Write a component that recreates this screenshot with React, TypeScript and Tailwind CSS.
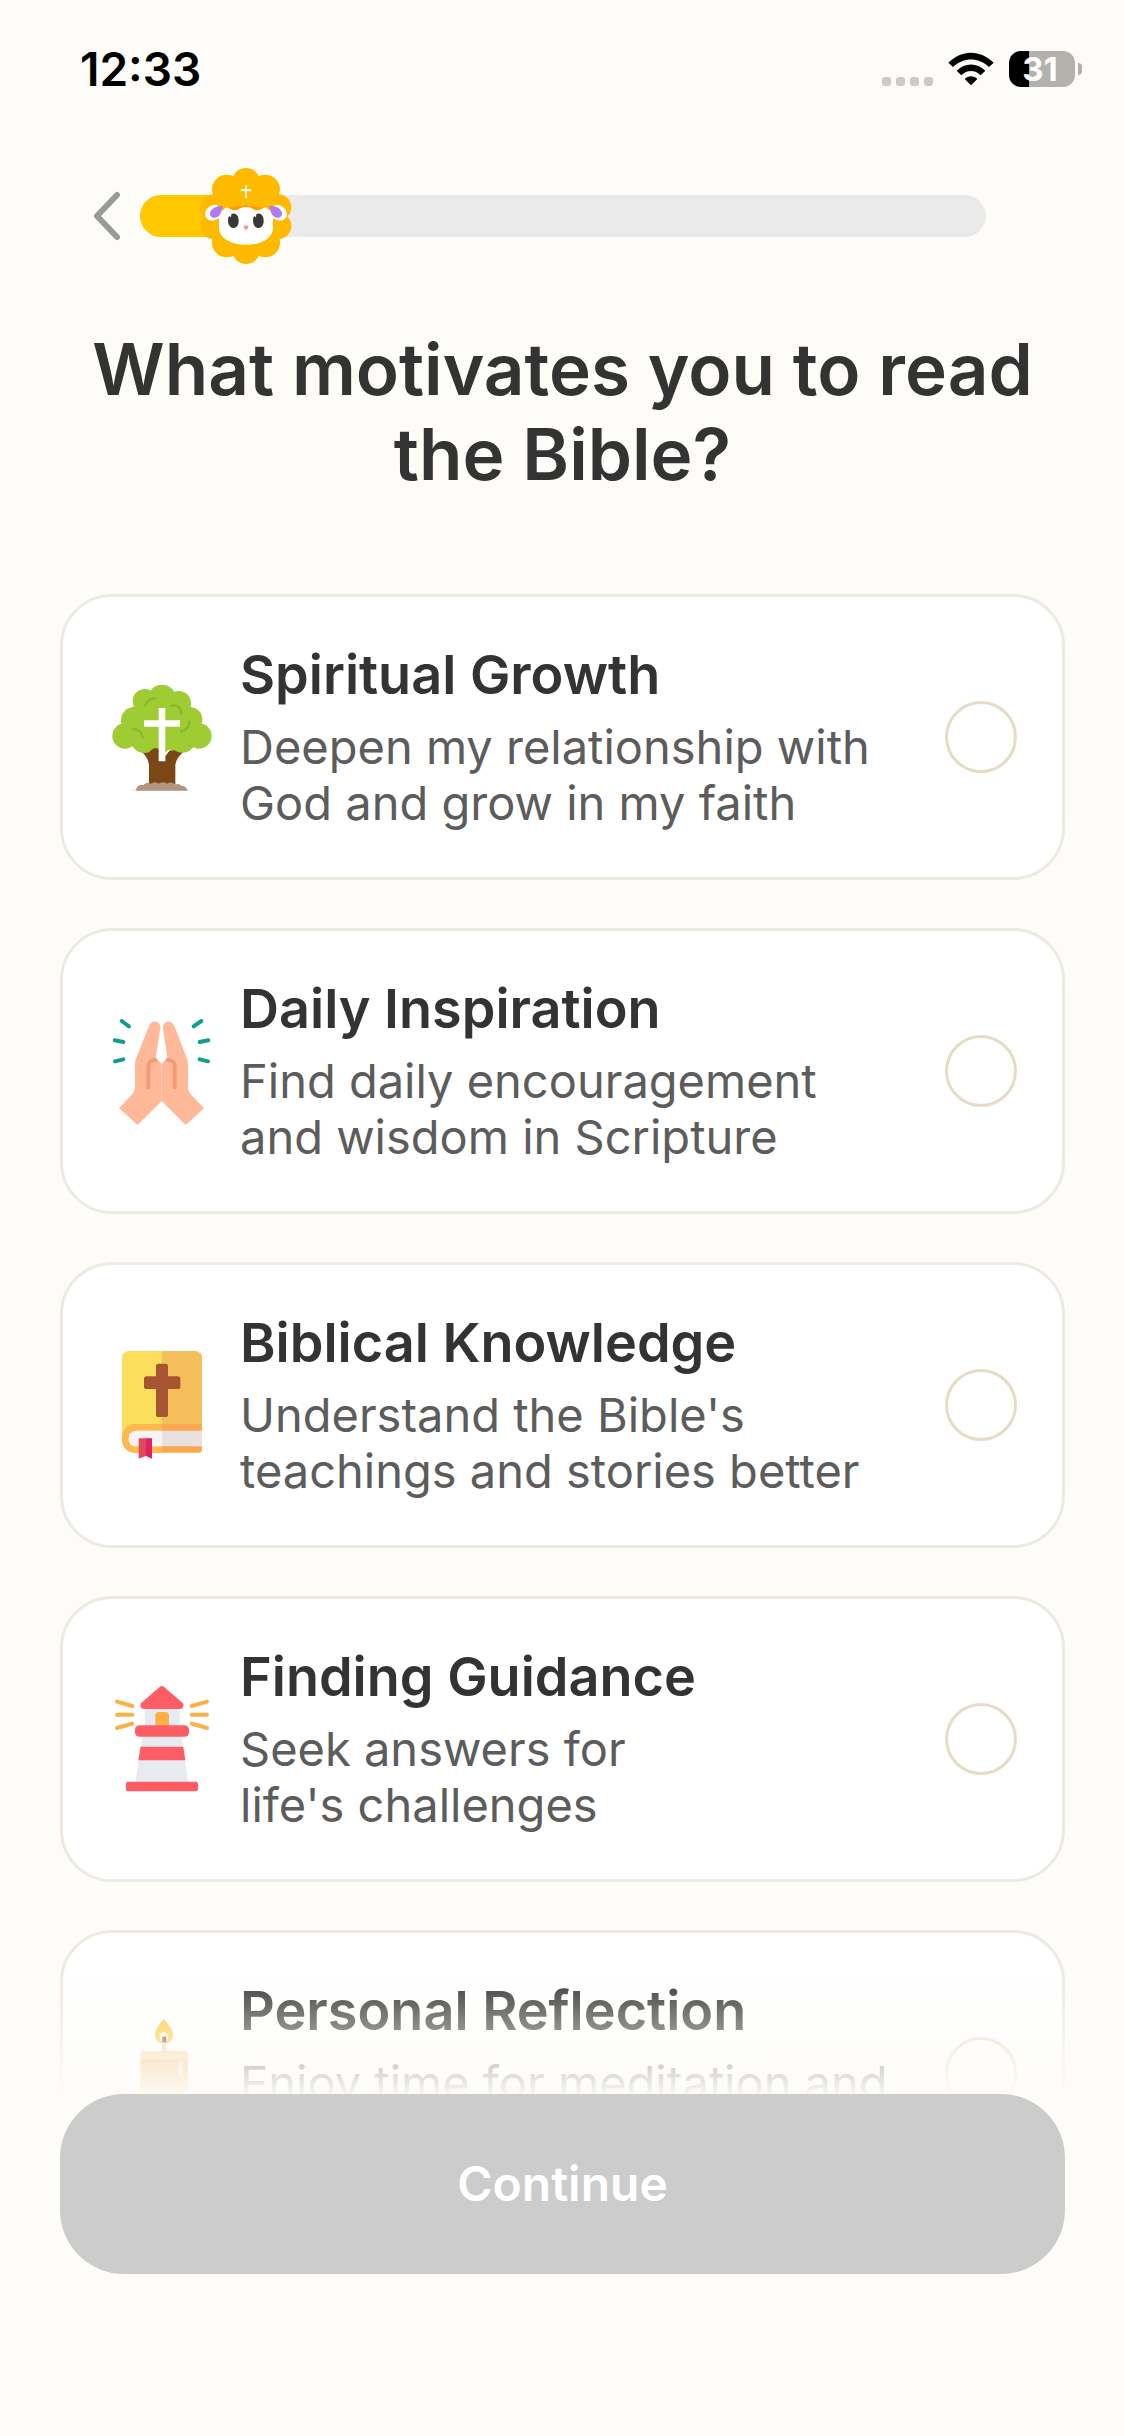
import { useState } from "react";
import type { ReactNode } from "react";

type Option = {
  id: string;
  title: string;
  description: string;
  icon: ReactNode;
};

function TreeIcon() {
  return (
    <svg viewBox="39 39 324 324" className="size-27 shrink-0" aria-hidden="true">
      <path d="M106 362h186l-20-6H126z" fill="#e9e4e0" />
      <path
        d="M138 244c14 12 22 24 24 42v58h79v-58c2-18 12-30 28-44l-36-14h-68z"
        fill="#7a4715"
      />
      <path
        d="M123 362c0-12 10-20 22-16 5-8 14-10 22-5 8-6 18-6 24 0 8-6 18-6 25 0 9-6 18-5 24 3 8-4 16-2 20 4 9-1 16 5 17 14z"
        fill="#b3957f"
      />
      <g fill="#9fcb33">
        <circle cx="90" cy="198" r="38" />
        <circle cx="116" cy="150" r="38" />
        <circle cx="149" cy="93" r="36" />
        <circle cx="201" cy="86" r="42" />
        <circle cx="251" cy="100" r="37" />
        <circle cx="286" cy="148" r="36" />
        <circle cx="312" cy="198" r="38" />
        <circle cx="148" cy="208" r="41" />
        <circle cx="262" cy="208" r="40" />
        <path d="M110 110h180v112l-34 22-12-4-30 4-12-8-24-1-14 8-54-20z" />
      </g>
      <g fill="none" stroke="#8bb72a" strokeWidth="7" strokeLinecap="round">
        <path d="M151 106c4-13 14-20 28-21" />
        <path d="M230 107c16-4 27 4 29 24" />
        <path d="M113 177c17-1 28 9 30 26" />
        <path d="M283 155c-1 17-10 27-25 29" />
      </g>
      <path d="M163 246c6-6 12-11 18-12l10 8v20h-12z" fill="#7a4715" />
      <path d="M191 114h20v37h44v19h-44v75l16-8-16 22v15h-20V170h-44v-19h44z" fill="#fff" />
    </svg>
  );
}

function PrayingHandsIcon() {
  return (
    <svg viewBox="39 51 324 324" className="size-27 shrink-0" aria-hidden="true">
      <g stroke="#0f9d8d" strokeWidth="12" strokeLinecap="round">
        <path d="M80 63l22 16M59 121l26 5M60 184l25-6M319 63l-23 16M340 121l-26 5M339 184l-25-6" />
      </g>
      <g fill="#ffb898">
        <path d="M163 76c8-19 35-14 33 8l-14 90 18 17v112l-72 72-56-50 37-39c8-9 11-15 11-25v-68c0-8 2-14 5-22z" />
        <path d="M237 76c-8-19-35-14-33 8l13 90-17 17v112l72 72 55-50-37-39c-8-9-11-15-11-25v-68c0-8-2-14-5-22z" />
      </g>
      <g fill="none" stroke="#f39b78" strokeWidth="12" strokeLinecap="round">
        <path d="M160 262v-63c0-11 8-19 21-19" />
        <path d="M239 262v-63c0-11-8-19-21-19" />
      </g>
    </svg>
  );
}

function BibleIcon() {
  return (
    <svg viewBox="39 63 324 324" className="size-27 shrink-0" aria-hidden="true">
      <path d="M101 63h100v305h-80c-24 0-40-17-40-40V83c0-11 9-20 20-20z" fill="#fbdf5c" />
      <path d="M201 63h100c11 0 20 9 20 20v200l-40 40h-80z" fill="#f4be5a" />
      <path d="M321 283v19h-10v47h10v10c0 6-4 9-9 9H121c-24 0-40-17-40-42s16-43 40-43z" fill="#fba650" />
      <path d="M201 283h-80c-24 0-40 18-40 43s16 42 40 42h80z" fill="#fdb84f" />
      <path d="M321 302v47H123c-14 0-22-10-22-23s8-24 22-24z" fill="#e9e1de" />
      <path d="M201 302v47h-78c-14 0-22-10-22-23s8-24 22-24z" fill="#f8f4f4" />
      <path d="M131 325h21v53l-21 8z" fill="#e2495d" />
      <path d="M151 325h20v61l-20-9z" fill="#de2361" />
      <path
        d="M190 101h22c4 0 7 3 7 7v31h30c4 0 7 3 7 7v24c0 4-3 7-7 7h-30v77c0 4-3 7-7 7h-22c-4 0-7-3-7-7v-77h-29c-4 0-7-3-7-7v-24c0-4 3-7 7-7h29v-31c0-4 3-7 7-7z"
        fill="#a75530"
      />
    </svg>
  );
}

function LighthouseIcon() {
  return (
    <svg viewBox="39 45 324 324" className="size-27 shrink-0" aria-hidden="true">
      <g stroke="#fdb045" strokeWidth="12" strokeLinecap="round">
        <path d="M66 95l46 13M66 134h46M66 174l46-13M336 95l-46 13M336 134h-46M336 174l-46-13" />
      </g>
      <path d="M149 112h105v58H149z" fill="#e6eaf1" />
      <path d="M181 168v-32c0-6 4-10 10-10h21c6 0 10 4 10 10v32z" fill="#fdb045" />
      <path d="M194 51c4-4 9-4 13 0l57 49c4 8 0 17-9 17H147c-9 0-14-9-9-17z" fill="#ff5d66" />
      <path d="M143 196h116l21 142H121z" fill="#e6eaf1" />
      <path d="M137 230h128l6 41H130z" fill="#ff5d66" />
      <rect x="120" y="166" width="162" height="34" rx="13" fill="#ff5d66" />
      <rect x="93" y="335" width="216" height="29" rx="6" fill="#ff5d66" />
    </svg>
  );
}

function CandleIcon() {
  return (
    <svg viewBox="174 297 324 324" className="size-27 shrink-0" aria-hidden="true">
      <path d="M341 297c12 14 28 32 28 49 0 15-11 25-27 25s-27-10-27-25c0-17 14-35 26-49z" fill="#fbc531" />
      <ellipse cx="342" cy="352" rx="13" ry="15" fill="#fff3d8" />
      <path d="M337 364h12v36h-12z" fill="#f4cf9d" />
      <path d="M337 350h12v17h-12z" fill="#7c3b20" />
      <rect x="271" y="394" width="143" height="226" rx="12" fill="#f5b877" />
      <path d="M271 418v-12c0-7 5-12 12-12h119c7 0 12 5 12 12v12z" fill="#fbd29c" />
      <path d="M386 420h12v50h-12z" fill="#fde0b8" />
    </svg>
  );
}

function SheepMarker() {
  return (
    <svg viewBox="21 39 288 288" className="absolute -top-[27px] -right-12 size-24 max-w-none" aria-hidden="true">
      <g fill="#ffba00">
        <circle cx="165" cy="183" r="112" />
        <circle cx="165" cy="81" r="42" />
        <circle cx="107" cy="103" r="44" />
        <circle cx="223" cy="103" r="44" />
        <circle cx="67" cy="157" r="39" />
        <circle cx="262" cy="157" r="39" />
        <circle cx="67" cy="213" r="39" />
        <circle cx="262" cy="213" r="39" />
        <circle cx="107" cy="263" r="44" />
        <circle cx="223" cy="263" r="44" />
        <circle cx="165" cy="285" r="42" />
      </g>
      <ellipse cx="68" cy="173" rx="27" ry="22" transform="rotate(-32 68 173)" fill="#fff" />
      <ellipse cx="262" cy="173" rx="27" ry="22" transform="rotate(32 262 173)" fill="#fff" />
      <path d="M84 190c0-26 34-46 81-46s81 20 81 46v28c0 30-33 51-81 51s-81-21-81-51z" fill="#fff" />
      <path d="M95 152c-2 20-10 34-22 36-10 1-18-6-16-15 3-13 20-22 38-21z" fill="#b07bee" />
      <path d="M235 152c2 20 10 34 22 36 10 1 18-6 16-15-3-13-20-22-38-21z" fill="#b07bee" />
      <path d="M106 152c10 14 31 18 41 8 12-5 24-5 36 0 10 10 31 6 41-8l-20-20h-78z" fill="#ff9c00" />
      <g fill="#ffba00">
        <circle cx="114" cy="116" r="42" />
        <circle cx="147" cy="124" r="30" />
        <circle cx="165" cy="116" r="30" />
        <circle cx="183" cy="124" r="30" />
        <circle cx="216" cy="116" r="42" />
        <path d="M64 130c0 16 8 22 30 22v-40zM266 130c0 16-8 22-30 22v-40z" />
      </g>
      <path d="M111 196c0-5 1-9 3-13l6 4 1-10c12-6 22 3 22 20 0 14-7 22-16 22s-16-9-16-23z" fill="#383838" />
      <path d="M186 196c0-5 1-9 3-13l6 4 1-10c12-6 22 3 22 20 0 14-7 22-16 22s-16-9-16-23z" fill="#383838" />
      <path d="M158 215c0-5 14-5 14 0 0 4-3 9-7 9s-7-5-7-9z" fill="#ff9292" />
      <path
        d="M163 91h4l-1 13 13-1v5l-13-1 1 22h-4l1-22-13 1v-5l13 1z"
        fill="#fff"
        stroke="#fff"
        strokeWidth="2"
      />
    </svg>
  );
}

function StatusBar() {
  return (
    <div className="flex items-center justify-between pt-[42px] pr-[43px] pl-20">
      <span className="text-[46px] leading-[54px] font-semibold text-black">12:33</span>
      <div className="flex items-center gap-[15px]">
        <div className="flex gap-[5px] pt-6">
          {[0, 1, 2, 3].map((dot) => (
            <span key={dot} className="size-[9px] rounded-[3px] bg-[#cbcac6]" />
          ))}
        </div>
        <svg viewBox="0 0 138 100" className="h-[34px] w-[46px]" aria-label="Wi-Fi">
          <path d="M1 31C40-9 98-9 137 31l-14 13C92 14 46 14 15 44z" />
          <path d="M26 55c25-25 61-25 86 0L98 69c-17-17-41-17-58 0z" />
          <path d="M50 80c11-11 27-11 38 0L69 99z" />
        </svg>
        <div className="flex items-center gap-[3px]">
          <div className="flex h-9 w-[66px] items-center justify-center rounded-xl bg-linear-to-r from-black from-31% to-[#b2b1ac] to-31% pr-1">
            <span className="text-[33px] leading-9 font-bold text-white">31</span>
          </div>
          <span className="h-3 w-1 rounded-r-full bg-[#b2b1ac]" />
        </div>
      </div>
    </div>
  );
}

function ProgressHeader() {
  return (
    <header className="flex items-center gap-5 pt-[95px] pr-[139px] pl-[93px]">
      <button type="button" aria-label="Back" className="shrink-0">
        <svg viewBox="0 0 27 50" className="h-[50px] w-[27px]" fill="none">
          <path d="M24 4L4 25l20 21" stroke="#9a9a97" strokeWidth="6" strokeLinecap="round" strokeLinejoin="round" />
        </svg>
      </button>
      <div
        role="progressbar"
        aria-label="Onboarding progress"
        aria-valuenow={12}
        className="h-[42px] flex-1 rounded-full bg-[#ebeaea]"
      >
        <div className="relative h-full w-1/8 rounded-l-full bg-[#ffc800]">
          <SheepMarker />
        </div>
      </div>
    </header>
  );
}

const options: Option[] = [
  {
    id: "growth",
    title: "Spiritual Growth",
    description: "Deepen my relationship with\nGod and grow in my faith",
    icon: <TreeIcon />,
  },
  {
    id: "inspiration",
    title: "Daily Inspiration",
    description: "Find daily encouragement\nand wisdom in Scripture",
    icon: <PrayingHandsIcon />,
  },
  {
    id: "knowledge",
    title: "Biblical Knowledge",
    description: "Understand the Bible's\nteachings and stories better",
    icon: <BibleIcon />,
  },
  {
    id: "guidance",
    title: "Finding Guidance",
    description: "Seek answers for\nlife's challenges",
    icon: <LighthouseIcon />,
  },
  {
    id: "reflection",
    title: "Personal Reflection",
    description: "Enjoy time for meditation and",
    icon: <CandleIcon />,
  },
];

type OptionCardProps = {
  option: Option;
  checked: boolean;
  onSelect: (id: string) => void;
};

function OptionCard({ option, checked, onSelect }: OptionCardProps) {
  return (
    <label
      htmlFor={option.id}
      className="flex min-h-[286px] cursor-pointer items-center gap-6 rounded-[52px] border-3 border-[#ebebe1] bg-white px-[45px] py-11"
    >
      {option.icon}
      <span className="flex flex-1 flex-col gap-3">
        <span className="text-[54px] leading-16 font-semibold text-[#333333]">{option.title}</span>
        <span className="min-h-28 text-[47px] leading-14 whitespace-pre-line text-[#5c5c5c]">
          {option.description}
        </span>
      </span>
      <input
        type="radio"
        id={option.id}
        name="motivation"
        checked={checked}
        onChange={() => onSelect(option.id)}
        className="size-18 shrink-0 appearance-none rounded-full border-3 border-[#e6dcc6] checked:border-[20px] checked:border-[#ffc800]"
      />
    </label>
  );
}

export default function App() {
  const [selected, setSelected] = useState("");

  return (
    <div className="flex h-screen flex-col overflow-hidden bg-[#fdfcf8] font-['Inter',sans-serif]">
      <StatusBar />
      <ProgressHeader />

      <main className="min-h-0 flex-1 overflow-y-auto px-15 pt-[86px] [scrollbar-width:none]">
        <h1 className="text-center text-[71px] leading-[85px] font-semibold text-[#333333]">
          What motivates you to read the Bible?
        </h1>
        <div role="radiogroup" aria-label="Motivation" className="flex flex-col gap-12 pt-[97px] pb-40">
          {options.map((option) => (
            <OptionCard key={option.id} option={option} checked={selected === option.id} onSelect={setSelected} />
          ))}
        </div>
      </main>

      <footer className="relative -mt-[136px]">
        <div className="pointer-events-none h-[136px] bg-linear-to-b from-[#fdfcf8]/0 to-[#fdfcf8] to-95%" />
        <div className="bg-[#fdfcf8] px-15 pb-[162px]">
          <button
            type="button"
            disabled={!selected}
            className="-mt-3 h-45 w-full rounded-[64px] bg-[#ffc800] text-[48px] font-semibold text-white disabled:bg-[#cccccc]"
          >
            Continue
          </button>
        </div>
      </footer>
    </div>
  );
}
